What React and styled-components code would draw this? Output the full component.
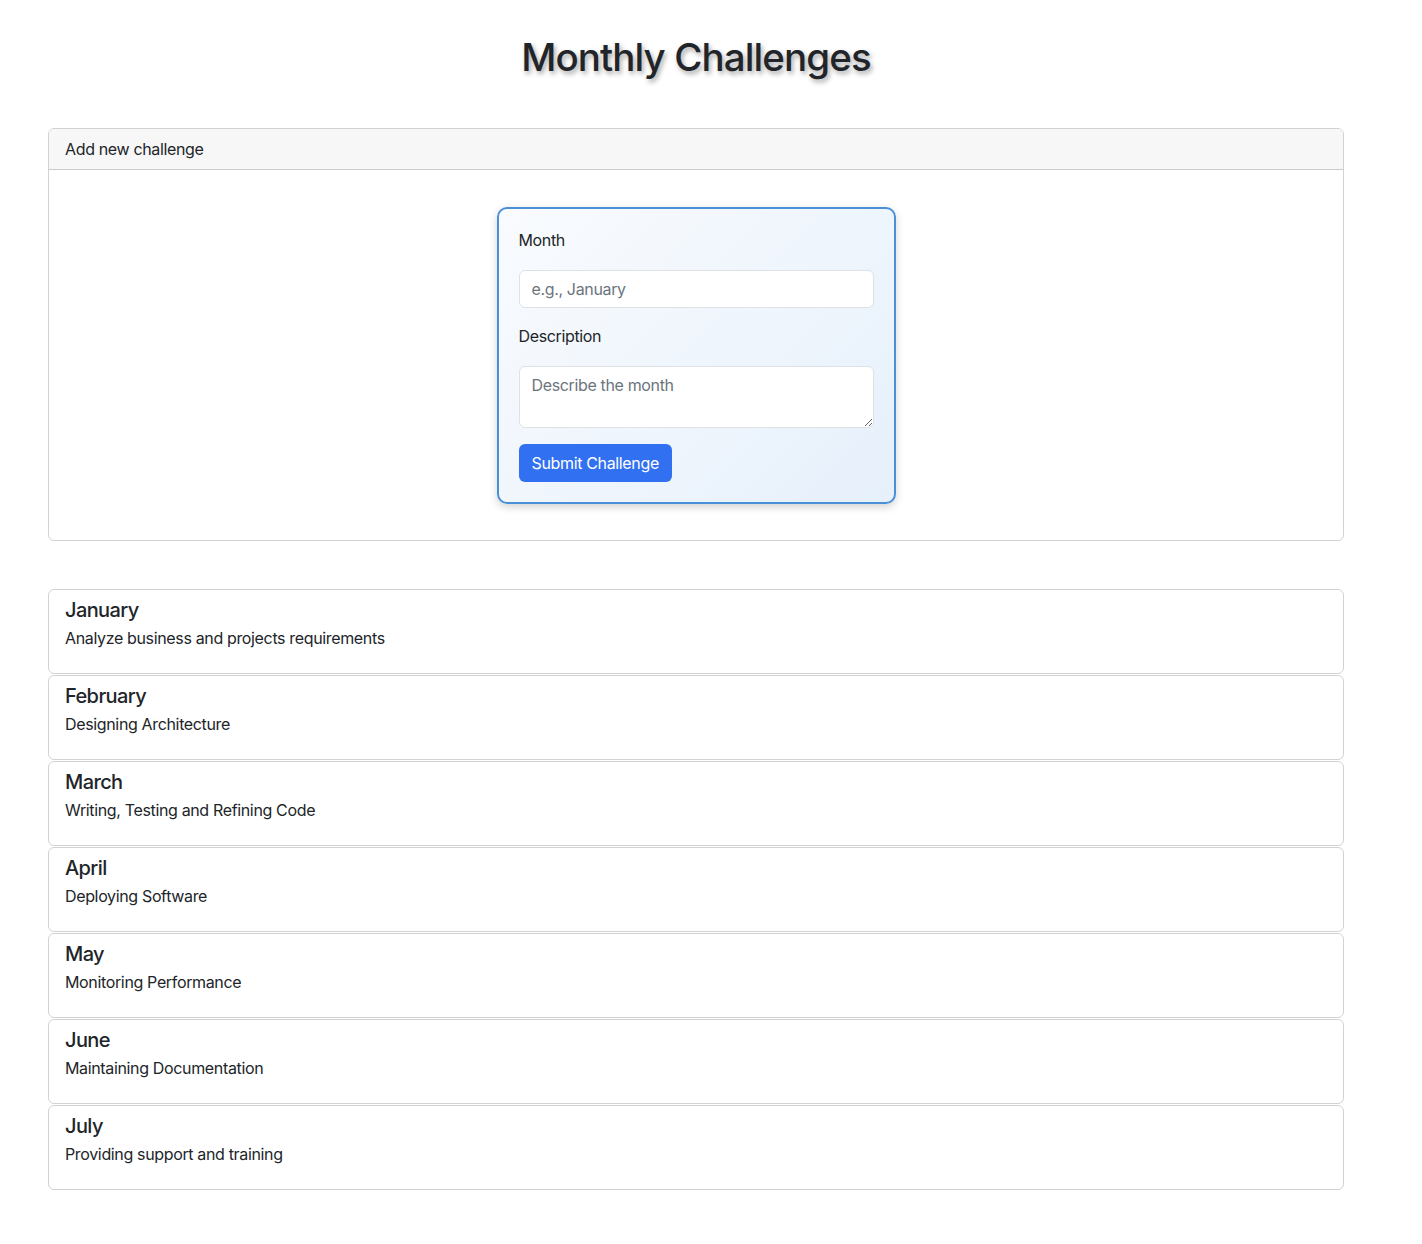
import React from 'react';
import styled, {createGlobalStyle} from 'styled-components';

const GlobalStyle = createGlobalStyle`
  body {
    margin: 0;
    background: #fff;
    color: #212529;
    font-family: Inter, "Noto Sans", "Liberation Sans", sans-serif;
    font-size: 16px;
    line-height: 1.5;
    letter-spacing: -0.35px;
  }
  * { box-sizing: border-box; }
`;

const Page = styled.div`
  width: 1296px;
  margin-left: 48px;
  padding: 34px 0 53px;
`;

const Title = styled.h1`
  margin: 0 0 47px;
  text-align: center;
  font-size: 38.5px;
  font-weight: 500;
  line-height: 47px;
  letter-spacing: -0.9px;
  text-shadow: 2px 3px 5px rgba(0, 0, 0, 0.35);
`;

const Card = styled.div`
  border: 1px solid rgba(0, 0, 0, 0.175);
  border-radius: 6px;
  overflow: hidden;
`;

const CardHeader = styled.div`
  background: #f7f7f7;
  border-bottom: 1px solid rgba(0, 0, 0, 0.175);
  padding: 8px 16px;
`;

const CardBody = styled.div`
  display: flex;
  justify-content: center;
  padding: 37px 16px 36px;
`;

const Form = styled.form`
  width: 399px;
  padding: 19px 20px 20px;
  border: 2px solid #4a90d9;
  border-radius: 10px;
  background: linear-gradient(135deg, #f9fbfe 0%, #e6f0fb 100%);
  box-shadow: 0 3px 8px rgba(0, 0, 0, 0.18);
`;

const Label = styled.label`
  display: block;
  margin-bottom: 18px;
`;

const inputBase = `
  display: block;
  width: 100%;
  border: 1px solid #dee2e6;
  border-radius: 6px;
  background: #fff;
  font: inherit;
  letter-spacing: inherit;
  color: #212529;
  padding: 6px 12px;
  &::placeholder { color: #6c757d; }
`;

const Input = styled.input`
  ${inputBase}
  height: 38px;
  margin-bottom: 16px;
`;

const TextArea = styled.textarea`
  ${inputBase}
  height: 62px;
  resize: vertical;
  margin-bottom: 16px;
`;

const Button = styled.button`
  background: #3270f2;
  color: #fff;
  border: 0;
  border-radius: 6px;
  height: 38px;
  padding: 0 13px;
  font: inherit;
  letter-spacing: inherit;
  cursor: pointer;
`;

const List = styled.div`
  display: flex;
  flex-direction: column;
  gap: 1px;
  margin-top: 48px;
`;

const Item = styled.div`
  border: 1px solid rgba(0, 0, 0, 0.175);
  border-radius: 6px;
  padding: 8px 16px 23px;
`;

const ItemTitle = styled.h5`
  margin: 0 0 4px;
  font-size: 20px;
  font-weight: 500;
  line-height: 24px;
  letter-spacing: -0.6px;
`;

const ItemText = styled.p`
  margin: 0;
  line-height: 24px;
`;

const challenges = [
  {month: 'January', text: 'Analyze business and projects requirements'},
  {month: 'February', text: 'Designing Architecture'},
  {month: 'March', text: 'Writing, Testing and Refining Code'},
  {month: 'April', text: 'Deploying Software'},
  {month: 'May', text: 'Monitoring Performance'},
  {month: 'June', text: 'Maintaining Documentation'},
  {month: 'July', text: 'Providing support and training'},
];

const App = () => (
  <Page>
    <GlobalStyle />
    <Title>Monthly Challenges</Title>
    <Card>
      <CardHeader>Add new challenge</CardHeader>
      <CardBody>
        <Form onSubmit={e => e.preventDefault()}>
          <Label htmlFor="month">Month</Label>
          <Input id="month" placeholder="e.g., January" />
          <Label htmlFor="desc">Description</Label>
          <TextArea id="desc" placeholder="Describe the month" />
          <Button type="submit">Submit Challenge</Button>
        </Form>
      </CardBody>
    </Card>
    <List>
      {challenges.map(({month, text}) => (
        <Item key={month}>
          <ItemTitle>{month}</ItemTitle>
          <ItemText>{text}</ItemText>
        </Item>
      ))}
    </List>
  </Page>
);

export default App;
